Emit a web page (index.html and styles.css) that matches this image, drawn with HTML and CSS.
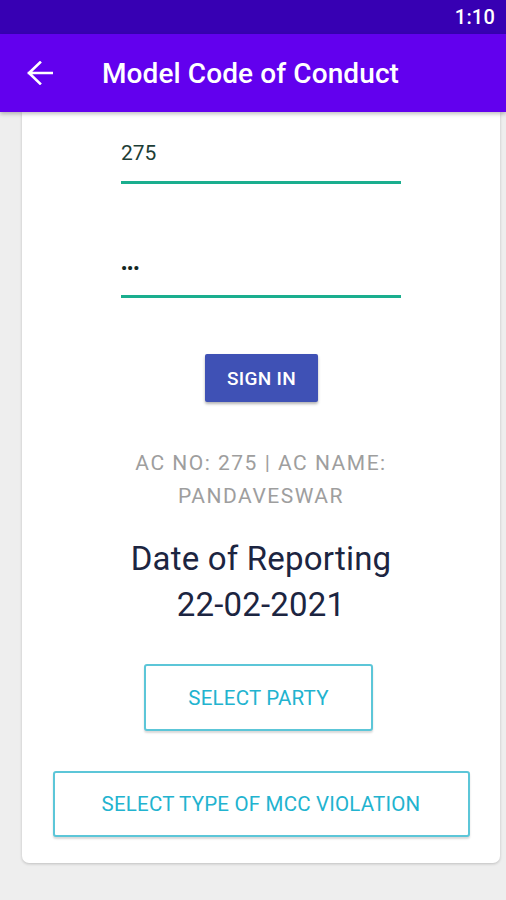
FILE: index.html
```html
<!DOCTYPE html>
<html>
<head>
<meta charset="utf-8">
<link rel="stylesheet" href="styles.css">
</head>
<body>
<div class="status-bar"><span class="time">1:10</span></div>
<header class="app-bar">
  <svg class="back" width="26" height="24" viewBox="0 0 26 24">
    <path d="M2 12H25M13 1.5L2 12L13 22.5" fill="none" stroke="#fff" stroke-width="2.6" stroke-linecap="square" stroke-linejoin="miter"/>
  </svg>
  <h1 class="title">Model Code of Conduct</h1>
</header>
<main class="content">
  <section class="card">
    <div class="field field-first"><span class="value">275</span></div>
    <div class="field field-second"><span class="value dots">•••</span></div>
    <button class="btn-primary">SIGN IN</button>
    <p class="ac-info">AC NO: 275 | AC NAME: PANDAVESWAR</p>
    <p class="report">Date of Reporting<br>22-02-2021</p>
    <button class="btn-outline btn-party">SELECT PARTY</button>
    <button class="btn-outline btn-type">SELECT TYPE OF MCC VIOLATION</button>
  </section>
</main>
</body>
</html>
```

FILE: styles.css
```css
* { box-sizing: border-box; }
html, body {
  margin: 0;
  padding: 0;
  background: #eeeeee;
  font-family: Roboto, "Noto Sans", sans-serif;
  width: 506px;
  height: 900px;
  overflow: hidden;
}
.status-bar {
  height: 34px;
  background: #3700b3;
  display: flex;
  justify-content: flex-end;
  align-items: center;
  padding-right: 11px;
}
.time {
  color: #fff;
  font-size: 20px;
  font-weight: 500;
  letter-spacing: 0.2px;
}
.app-bar {
  height: 78px;
  background: #6200ee;
  display: flex;
  align-items: center;
  padding-left: 27px;
  box-shadow: 0 2px 4px rgba(0,0,0,0.25);
  position: relative;
  z-index: 2;
}
.back { display: block; }
.title {
  margin: 0 0 0 49px;
  color: #fff;
  font-size: 28px;
  font-weight: 500;
  letter-spacing: 0.1px;
}
.content {
  padding: 0 6px 0 22px;
}
.card {
  background: #fff;
  border-radius: 0 0 7px 7px;
  box-shadow: 0 1px 3px rgba(0,0,0,0.2);
  display: flex;
  flex-direction: column;
  align-items: center;
  padding-bottom: 26px;
  margin-top: 0;
}
.field {
  width: 280px;
  border-bottom: 3px solid #1aae8e;
  line-height: 24px;
  padding-bottom: 14px;
}
.field-first { padding-top: 29px; }
.field-second { padding-top: 0; margin-top: 72px; padding-bottom: 14px; }
.value {
  font-size: 21px;
  color: #1d3d36;
}
.dots {
  font-size: 17px;
  font-weight: 700;
  letter-spacing: 0;
  color: #132822;
}
.btn-primary {
  margin-top: 56px;
  width: 113px;
  height: 48px;
  background: #3f51b5;
  color: #fff;
  border: none;
  border-radius: 2px;
  font-family: Roboto, sans-serif;
  font-size: 19px;
  font-weight: 500;
  letter-spacing: 0.3px;
  box-shadow: 0 2px 3px rgba(0,0,0,0.3);
  margin-left: 1px;
}
.ac-info {
  margin: 45px 0 0;
  width: 300px;
  text-align: center;
  color: #9e9e9e;
  font-size: 21px;
  line-height: 33px;
  letter-spacing: 1.5px;
}
.report {
  margin: 23px 0 0;
  text-align: center;
  color: #1c2541;
  font-size: 33px;
  line-height: 46px;
  letter-spacing: 0.2px;
}
.btn-outline {
  background: #fff;
  border: 2px solid #5cc6d8;
  border-radius: 3px;
  color: #22b3cf;
  font-family: Roboto, sans-serif;
  font-size: 20.5px;
  font-weight: 400;
  letter-spacing: 0.2px;
  box-shadow: 0 2px 2px rgba(0,0,0,0.15);
}
.btn-party {
  margin-top: 36px;
  margin-right: 5px;
  width: 229px;
  height: 67px;
}
.btn-type {
  margin-top: 40px;
  width: 417px;
  height: 66px;
}
```
